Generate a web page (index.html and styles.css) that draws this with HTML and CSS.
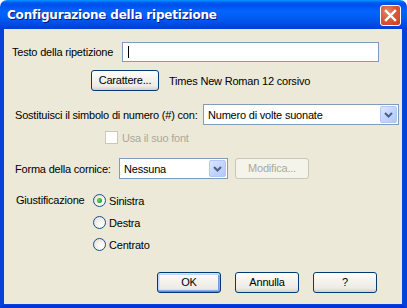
FILE: index.html
```html
<!DOCTYPE html>
<html>
<head>
<meta charset="utf-8">
<link rel="stylesheet" href="styles.css">
</head>
<body>
<div class="window">
  <div class="titlebar">
    <span class="title">Configurazione della ripetizione</span>
    <span class="close">
      <svg width="21" height="21" viewBox="0 0 21 21">
        <path d="M6 6 L15 15 M15 6 L6 15" stroke="#fff" stroke-width="2.4" stroke-linecap="square"/>
      </svg>
    </span>
  </div>
  <div class="client">
    <div class="row row-text">
      <span class="lbl lbl-text">Testo della ripetizione</span>
      <div class="textbox"><span class="caret"></span></div>
    </div>
    <div class="row row-font">
      <span class="btn btn-font">Carattere...</span>
      <span class="font-desc">Times New Roman 12 corsivo</span>
    </div>
    <div class="row row-sub">
      <span class="lbl lbl-sub">Sostituisci il simbolo di numero (#) con:</span>
      <div class="combo combo-sub">
        <span class="combo-text">Numero di volte suonate</span>
        <span class="drop"><svg width="9" height="6" viewBox="0 0 9 6"><path d="M1 1 L4.5 4.5 L8 1" fill="none" stroke="#4D6185" stroke-width="2"/></svg></span>
      </div>
    </div>
    <div class="row row-check">
      <span class="check"></span>
      <span class="disabled-text">Usa il suo font</span>
    </div>
    <div class="row row-frame">
      <span class="lbl lbl-frame">Forma della cornice:</span>
      <div class="combo combo-frame">
        <span class="combo-text">Nessuna</span>
        <span class="drop"><svg width="9" height="6" viewBox="0 0 9 6"><path d="M1 1 L4.5 4.5 L8 1" fill="none" stroke="#4D6185" stroke-width="2"/></svg></span>
      </div>
      <span class="btn btn-disabled">Modifica...</span>
    </div>
    <div class="row row-just">
      <span class="lbl lbl-just">Giustificazione</span>
      <div class="radios">
        <div class="radio-row"><span class="radio checked"></span><span>Sinistra</span></div>
        <div class="radio-row"><span class="radio"></span><span>Destra</span></div>
        <div class="radio-row"><span class="radio"></span><span>Centrato</span></div>
      </div>
    </div>
    <div class="row row-buttons">
      <span class="btn btn-default">OK</span>
      <span class="btn">Annulla</span>
      <span class="btn">?</span>
    </div>
  </div>
</div>
</body>
</html>
```

FILE: styles.css
```css
html, body {
  margin: 0;
  padding: 0;
  background: #ffffff;
}

.window {
  width: 407px;
  height: 308px;
  display: flex;
  flex-direction: column;
  font-family: "Liberation Sans", Arial, sans-serif;
  font-size: 11px;
  letter-spacing: -0.2px;
  color: #000;
}

.titlebar {
  height: 29px;
  flex: none;
  box-sizing: border-box;
  border-radius: 7px 7px 0 0;
  background: linear-gradient(to bottom,
    #0997FF 0px, #0053EE 3px, #0050EE 6px, #0066FF 11px,
    #0058EE 20px, #0046DE 26px, #003DD7 29px);
  display: flex;
  align-items: center;
  padding: 0 6px 1px 7px;
}

.title {
  flex: 1;
  color: #fff;
  font-family: "DejaVu Sans", sans-serif;
  font-weight: bold;
  font-size: 12px;
  letter-spacing: -0.2px;
  text-shadow: 1px 1px 0 #0A1883;
  margin-top: 1px;
}

.close {
  width: 21px;
  height: 21px;
  box-sizing: border-box;
  border: 1px solid #fff;
  border-radius: 3px;
  background: radial-gradient(circle at 35% 30%, #E9876B 0%, #D85A3A 45%, #C5411F 100%);
  display: flex;
  margin-top: 2px;
}

.close svg { display: block; margin: -1px; }

.client {
  flex: 1;
  background: #ECE9D8;
  border-left: 3px solid #0841DA;
  border-right: 4px solid #0841DA;
  border-bottom: 3px solid #0831D9;
  box-shadow: inset 1px 0 0 #0046DD, inset -1px 0 0 #0046DD, inset 0 -1px 0 #0046DD;
  box-sizing: border-box;
  display: flex;
  flex-direction: column;
}

.row {
  display: flex;
  align-items: center;
}

.row > * { flex: none; }

.lbl { white-space: nowrap; }

/* Row 1 */
.row-text { margin-top: 13px; height: 20px; }
.lbl-text { padding-left: 9px; width: 110px; }
.textbox {
  width: 257px;
  height: 20px;
  box-sizing: border-box;
  border: 1px solid #7F9DB9;
  background: #fff;
  display: flex;
  align-items: center;
  padding-left: 5px;
}
.caret {
  width: 1px;
  height: 12px;
  background: #000;
}

/* Row 2 */
.row-font { margin-top: 8px; height: 21px; padding-left: 88px; }
.btn-font { width: 68px; }
.font-desc { margin-left: 10px; }

/* Buttons */
.btn {
  height: 21px;
  box-sizing: border-box;
  border: 1px solid #003C74;
  border-radius: 3px;
  background: linear-gradient(to bottom, #FFFFFF 0%, #F4F3EE 40%, #ECEBE6 80%, #D6D0C5 100%);
  display: flex;
  align-items: center;
  justify-content: center;
  padding-bottom: 1px;
}

.btn-disabled {
  width: 74px;
  border-color: #C9C7BA;
  background: #F5F4EA;
  color: #ACA899;
  margin-left: 7px;
}

.btn-default {
  box-shadow: inset 0 1px 0 #CEE7FF, inset 0 -1px 0 #6982EE, inset 1px 0 0 #BCD4F6, inset -1px 0 0 #89ADE4, inset 0 2px 0 #BCD4F6, inset 0 -2px 0 #89ADE4, inset 2px 0 0 #CEE7FF, inset -2px 0 0 #7D99E5;
}

/* Row 3 */
.row-sub { margin-top: 13px; height: 21px; }
.lbl-sub { padding-left: 12px; width: 188px; }

.combo {
  height: 21px;
  box-sizing: border-box;
  border: 1px solid #7F9DB9;
  background: #fff;
  display: flex;
  align-items: center;
  padding: 1px;
}
.combo-text { flex: 1; padding-left: 3px; }
.combo-sub { width: 196px; }
.combo-frame { width: 109px; }

.drop {
  width: 17px;
  height: 17px;
  box-sizing: border-box;
  border: 1px solid #B1C7F5;
  border-radius: 2px;
  background: linear-gradient(135deg, #DCE8FE 0%, #C3D5FD 50%, #B2C9F6 100%);
  display: flex;
  align-items: center;
  justify-content: center;
}
.drop svg { display: block; }

/* Row 4 */
.row-check { margin-top: 6px; height: 13px; padding-left: 102px; }
.check {
  width: 13px;
  height: 13px;
  box-sizing: border-box;
  border: 1px solid #CAC8BB;
  background: #fff;
}
.disabled-text { color: #ACA899; margin-left: 4px; }

/* Row 5 */
.row-frame { margin-top: 14px; height: 21px; }
.lbl-frame { padding-left: 12px; width: 104px; }

/* Row 6 */
.row-just { margin-top: 15px; align-items: flex-start; }
.lbl-just { padding-left: 13px; width: 77px; line-height: 13px; }
.radios { display: flex; flex-direction: column; gap: 9px; }
.radio-row { display: flex; align-items: center; height: 13px; gap: 3px; }
.radio {
  width: 13px;
  height: 13px;
  box-sizing: border-box;
  border: 1px solid #1C5180;
  border-radius: 50%;
  background: radial-gradient(circle at 65% 65%, #FFFFFF 0%, #F4F3EE 40%, #DCD9CB 100%);
  display: flex;
  align-items: center;
  justify-content: center;
}
.radio.checked::after {
  content: "";
  width: 5px;
  height: 5px;
  border-radius: 50%;
  background: radial-gradient(circle at 40% 40%, #60E060 0%, #21A121 70%);
}

/* Buttons row */
.row-buttons { margin-top: 21px; padding-left: 154px; gap: 14px; }
.row-buttons .btn { width: 64px; }
```
